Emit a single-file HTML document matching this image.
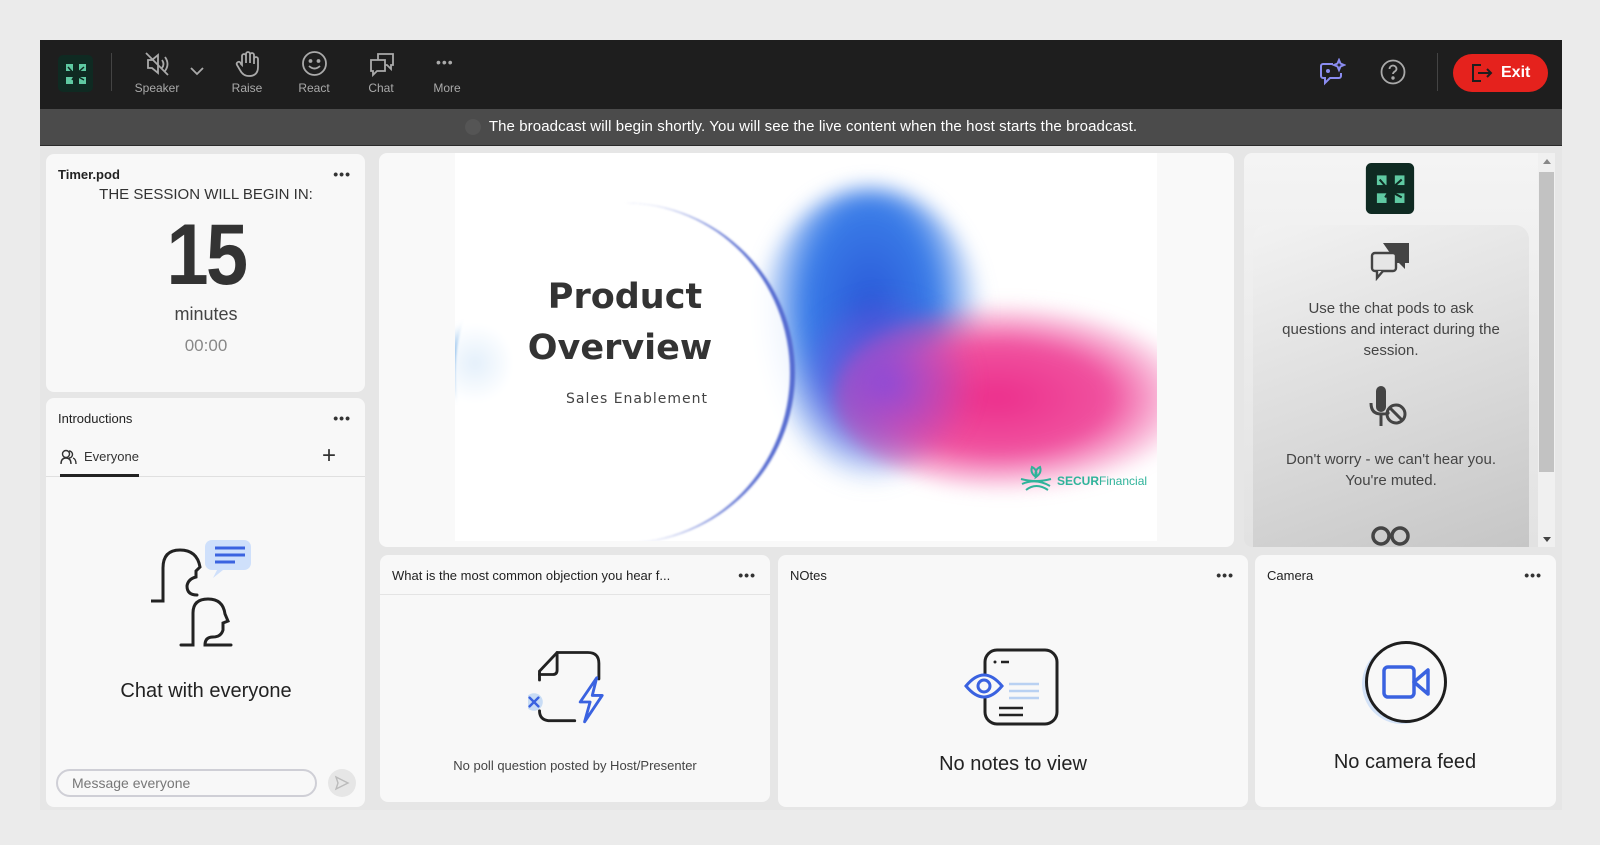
<!DOCTYPE html>
<html><head><meta charset="utf-8"><style>
*{box-sizing:border-box;margin:0;padding:0}
body{width:1600px;height:845px;background:#ebebeb;font-family:"Liberation Sans","DejaVu Sans",sans-serif;position:relative;overflow:hidden;color:#222}
.abs{position:absolute}
.top{left:40px;top:40px;width:1522px;height:69px;background:#1e1e1e}
.banner{left:40px;top:109px;width:1522px;height:37px;background:#4b4b4b;border-bottom:1px solid #2a2a2a;color:#fff;font-size:15px;text-align:center;line-height:36px;letter-spacing:0.1px}
.frame{left:40px;top:146px;width:1522px;height:664px;background:#e6e6e6}
.pod{position:absolute;background:#f8f8f8;border-radius:8px}
.ttl{position:absolute;left:12px;top:12px;font-size:13px;color:#222}
.dots{position:absolute;right:14px;top:12px;font-size:14px;letter-spacing:1px;color:#333;font-weight:bold}
.lbl{position:absolute;top:81px;font-size:12px;color:#aaa;transform:translateX(-50%)}
.c{position:absolute;transform:translateX(-50%);white-space:nowrap;text-align:center}
</style></head><body>
<div class="abs top"></div>
<svg class="abs" style="left:58px;top:55px" width="35" height="37" viewBox="0 0 35 37"><rect width="35" height="37" rx="5" fill="#0f2a22"/><rect x="8" y="9" width="7" height="7" fill="#5fc9a2"/><rect x="21" y="9" width="7" height="7" fill="#5fc9a2"/><rect x="8" y="22" width="7" height="7" fill="#5fc9a2"/><rect x="21" y="22" width="7" height="7" fill="#5fc9a2"/><path d="M10 12 L17 20 L26 12 M17 20 L26 25 M17 20 L14 25" stroke="#0f2a22" stroke-width="1.5" fill="none"/></svg>
<div class="abs" style="left:111px;top:53px;width:1px;height:38px;background:#444"></div>
<svg class="abs" style="left:143px;top:50px" width="28" height="28" viewBox="0 0 28 28" fill="none" stroke="#aaa" stroke-width="1.8"><path d="M5 10h4l6-5v18l-6-5H5z"/><path d="M19 10q3 4 0 8M22 7q5 7 0 14"/><path d="M3 3l22 22"/></svg>
<svg class="abs" style="left:189px;top:66px" width="16" height="10"><path d="M2 2l6 6 6-6" stroke="#aaa" stroke-width="1.8" fill="none"/></svg>
<svg class="abs" style="left:235px;top:50px" width="26" height="28" viewBox="0 0 26 28" fill="none" stroke="#aaa" stroke-width="1.8"><path d="M7 15V6a2 2 0 014 0v7V4a2 2 0 014 0v9V5a2 2 0 014 0v9V9a2 2 0 014 0v8q0 9-9 9-6 0-9-6l-3-5q-1-2 1-3t3 2z"/></svg>
<svg class="abs" style="left:301px;top:50px" width="27" height="27" viewBox="0 0 27 27" fill="none" stroke="#aaa" stroke-width="1.8"><circle cx="13.5" cy="13.5" r="11.5"/><circle cx="9.5" cy="11" r="1" fill="#aaa"/><circle cx="17.5" cy="11" r="1" fill="#aaa"/><path d="M8 16q5.5 5 11 0"/></svg>
<svg class="abs" style="left:368px;top:51px" width="28" height="27" viewBox="0 0 28 27" fill="none" stroke="#aaa" stroke-width="1.8"><path d="M3 9h14v11H9l-4 4v-4H3z"/><path d="M10 9V3h15v11h-2v4l-4-4h-2"/></svg>
<div class="abs" style="left:436px;top:54px;font-size:14px;color:#aaa;letter-spacing:1px">•••</div>
<div class="lbl" style="left:157px">Speaker</div>
<div class="lbl" style="left:247px">Raise</div>
<div class="lbl" style="left:314px">React</div>
<div class="lbl" style="left:381px">Chat</div>
<div class="lbl" style="left:447px">More</div>
<svg class="abs" style="left:1318px;top:58px" width="28" height="28" viewBox="0 0 28 28" fill="none" stroke="#8a8cf0" stroke-width="2"><path d="M15 6H5a2 2 0 00-2 2v10a2 2 0 002 2h2v5l5-5h9a2 2 0 002-2v-3"/><path d="M21 2l1.5 3.5L26 7l-3.5 1.5L21 12l-1.5-3.5L16 7l3.5-1.5z"/><circle cx="10" cy="13" r="1" fill="#8a8cf0"/></svg>
<svg class="abs" style="left:1380px;top:59px" width="26" height="26" viewBox="0 0 26 26" fill="none" stroke="#aaa" stroke-width="1.8"><circle cx="13" cy="13" r="11.5"/><path d="M9.5 10a3.5 3.5 0 117 0c0 2.5-3.5 2.5-3.5 5"/><circle cx="13" cy="19" r="0.8" fill="#aaa"/></svg>
<div class="abs" style="left:1437px;top:53px;width:1px;height:38px;background:#444"></div>
<div class="abs" style="left:1453px;top:54px;width:95px;height:38px;border-radius:19px;background:#e5221d;color:#fff;font-weight:bold;font-size:16px;line-height:38px;padding-left:48px">Exit</div>
<svg class="abs" style="left:1470px;top:63px" width="24" height="20" viewBox="0 0 24 20" fill="none" stroke="#1e1e1e" stroke-width="2"><path d="M11 2H3v16h8"/><path d="M8 10h13M17 6l4 4-4 4"/></svg>
<div class="abs banner"><span style="display:inline-block;width:16px;height:16px;border-radius:50%;background:#555;vertical-align:middle;margin-right:8px"></span>The broadcast will begin shortly. You will see the live content when the host starts the broadcast.</div>
<div class="abs frame"></div>

<div class="pod" style="left:46px;top:154px;width:319px;height:238px">
<div class="ttl" style="font-weight:bold;top:13px">Timer.pod</div><div class="dots">•••</div>
<div class="c" style="left:160px;top:32px;font-size:15px;color:#333">THE SESSION WILL BEGIN IN:</div>
<div class="c" style="left:160px;top:52px;font-size:86px;font-weight:bold;color:#333;transform:translateX(-50%) scaleX(0.88);letter-spacing:-3px">15</div>
<div class="c" style="left:160px;top:150px;font-size:18px;color:#444">minutes</div>
<div class="c" style="left:160px;top:182px;font-size:17px;color:#888">00:00</div>
</div>
<div class="pod" style="left:46px;top:398px;width:319px;height:409px">
<div class="ttl" style="top:13px">Introductions</div><div class="dots">•••</div>
<svg class="abs" style="left:14px;top:51px" width="17" height="16" viewBox="0 0 17 16" fill="none" stroke="#333" stroke-width="1.4"><circle cx="6" cy="5" r="3.5"/><path d="M1 15q0-6 5-6t5 6M9 2a3.5 3.5 0 110 7M13 9q3 1 3 6"/></svg>
<div class="abs" style="left:38px;top:51px;font-size:13px;color:#333">Everyone</div>
<div class="abs" style="left:276px;top:44px;font-size:24px;color:#333;font-weight:300">+</div>
<div class="abs" style="left:0;top:78px;width:319px;height:1px;background:#e0e0e0"></div>
<div class="abs" style="left:14px;top:76px;width:79px;height:3px;background:#222"></div>
<svg class="abs" style="left:105px;top:140px" width="100" height="110" viewBox="0 0 100 110" fill="none"><rect x="60" y="2" width="46" height="30" rx="7" fill="#cfe0fb" transform="translate(-6 0)"/><path d="M66 32l-4 8 10-8z" fill="#cfe0fb"/><path d="M64 10h30M64 17h30M64 24h20" stroke="#3b63e0" stroke-width="3"/><path d="M0 63h12V30q0-18 17-18t20 17l-4 4v6q-8 2-9 9 0 9 10 9" stroke="#222" stroke-width="3" stroke-linecap="round"/><path d="M30 107h12V75q0-14 15-14t17 15l3 7-5 2v7q-2 7-10 7q-8 0-8 8h26" stroke="#222" stroke-width="3" stroke-linecap="round"/></svg>
<div class="c" style="left:160px;top:282px;font-size:20px;color:#222">Chat with everyone</div>
<div class="abs" style="left:10px;top:371px;width:261px;height:28px;border:2px solid #cfcfd6;border-radius:14px;font-size:14px;color:#777;line-height:24px;padding-left:14px">Message everyone</div>
<div class="abs" style="left:282px;top:371px;width:28px;height:28px;border-radius:50%;background:#e6e6e6"></div>
<svg class="abs" style="left:288px;top:377px" width="16" height="16" viewBox="0 0 16 16" fill="none" stroke="#bbb" stroke-width="1.4"><path d="M2 2l12 6-12 6 2-6z"/></svg>
</div>

<div class="pod" style="left:379px;top:153px;width:855px;height:394px;background:#f9f9f9"></div>
<div class="abs" style="left:455px;top:153px;width:702px;height:388px;background:#fff;overflow:hidden">
 <div class="abs" style="left:300px;top:35px;width:230px;height:300px;border-radius:50%;background:radial-gradient(ellipse at 50% 40%,#2a58d8 0,#3a7de8 40%,rgba(80,140,240,0) 70%);filter:blur(10px)"></div>
 <div class="abs" style="left:380px;top:150px;width:360px;height:190px;border-radius:50%;background:radial-gradient(ellipse at 45% 50%,#ec2f8c 0,#f0529f 40%,rgba(245,120,180,0) 72%);filter:blur(8px)"></div>
 <div class="abs" style="left:340px;top:140px;width:180px;height:180px;border-radius:50%;background:radial-gradient(circle,#8a4ad8 0,rgba(160,80,220,0) 70%);filter:blur(10px)"></div>
 <div class="abs" style="left:-15px;top:165px;width:70px;height:90px;border-radius:50%;background:radial-gradient(circle,#1f7ed8 0,rgba(40,140,230,0) 70%);filter:blur(4px)"></div>
 <div class="abs" style="left:0px;top:50px;width:340px;height:340px;border-radius:50%;background:rgba(255,255,255,0.88);border-right:5px solid rgba(58,82,200,0.85);filter:blur(1px)"></div>
 <div class="c" style="left:170px;top:124px;font-family:'DejaVu Sans',sans-serif;font-weight:bold;font-size:35px;color:#333">Product</div>
 <div class="c" style="left:165px;top:175px;font-family:'DejaVu Sans',sans-serif;font-weight:bold;font-size:35px;color:#333">Overview</div>
 <div class="c" style="left:182px;top:238px;font-family:'DejaVu Sans',sans-serif;font-size:14px;letter-spacing:1px;color:#444">Sales Enablement</div>
 <svg class="abs" style="left:563px;top:310px" width="36" height="32" viewBox="0 0 36 32" fill="none" stroke="#2fb39a" stroke-width="2"><path d="M18 14q-6-4-4-10 6 3 4 10q6-4 4-10-6 3-4 10"/><path d="M3 16q15 4 30 0M4 21q14-6 28 2M8 27q10-8 22 0"/></svg>
 <div class="abs" style="left:602px;top:321px;font-size:12px;color:#2fb39a"><b>SECUR</b>Financial</div>
</div>

<div class="pod" style="left:1244px;top:153px;width:311px;height:394px;background:linear-gradient(180deg,#f4f4f4,#e2e2e2)"></div>
<div class="abs" style="left:1538px;top:153px;width:17px;height:394px;background:#f0f0f0"></div>
<div class="abs" style="left:1539px;top:172px;width:15px;height:300px;background:#c2c2c2"></div>
<div class="abs" style="left:1543px;top:159px;width:0;height:0;border:4px solid transparent;border-bottom:5px solid #888;border-top:0"></div>
<div class="abs" style="left:1543px;top:537px;width:0;height:0;border:4px solid transparent;border-top:5px solid #444;border-bottom:0"></div>
<svg class="abs" style="left:1364px;top:163px" width="52" height="51" viewBox="0 0 35 37"><rect width="35" height="37" rx="4" fill="#0f2a22"/><rect x="8" y="9" width="7" height="7" fill="#5fc9a2"/><rect x="21" y="9" width="7" height="7" fill="#5fc9a2"/><rect x="8" y="22" width="7" height="7" fill="#5fc9a2"/><rect x="21" y="22" width="7" height="7" fill="#5fc9a2"/><path d="M10 12 L17 20 L26 12 M17 20 L26 25 M17 20 L14 25" stroke="#0f2a22" stroke-width="1.5" fill="none"/></svg>
<div class="abs" style="left:1253px;top:225px;width:276px;height:322px;border-radius:14px 14px 0 0;background:linear-gradient(160deg,#f2f2f2 0%,#d8d8d8 60%,#c6c6c6 100%);overflow:hidden">
 <svg class="abs" style="left:116px;top:16px" width="44" height="40" viewBox="0 0 44 40"><path d="M14 2h26v20h-4v6l-6-6h-2z" fill="#444"/><rect x="3" y="12" width="24" height="18" rx="3" fill="#e6e6e6" stroke="#444" stroke-width="2.4"/><path d="M8 30v7l6-7" fill="#e6e6e6" stroke="#444" stroke-width="2.4"/></svg>
 <div class="c" style="left:138px;top:73px;font-size:15px;color:#444;line-height:21px;white-space:normal;width:232px">Use the chat pods to ask questions and interact during the session.</div>
 <svg class="abs" style="left:114px;top:160px" width="44" height="42" viewBox="0 0 44 42" fill="none"><rect x="9" y="1" width="10" height="26" rx="5" fill="#444"/><path d="M4 18q0 11 10 11t6-2M14 29v12" stroke="#444" stroke-width="3"/><circle cx="29" cy="29" r="9" stroke="#444" stroke-width="3"/><path d="M23 23l12 12" stroke="#444" stroke-width="3"/></svg>
 <div class="c" style="left:138px;top:224px;font-size:15px;color:#444;line-height:21px">Don't worry - we can't hear you.<br>You're muted.</div>
 <svg class="abs" style="left:116px;top:296px" width="44" height="30"><circle cx="12" cy="15" r="8" stroke="#444" stroke-width="3.5" fill="none"/><circle cx="31" cy="15" r="8" stroke="#444" stroke-width="3.5" fill="none"/></svg>
</div>

<div class="pod" style="left:380px;top:555px;width:390px;height:247px">
 <div class="ttl" style="top:13px">What is the most common objection you hear f...</div><div class="dots">•••</div>
 <div class="abs" style="left:0;top:39px;width:390px;height:1px;background:#e4e4e4"></div>
 <svg class="abs" style="left:148px;top:92px" width="100" height="88" viewBox="0 0 90 80" fill="none" stroke-linecap="round"><path d="M10 30V22l16-17h28q10 0 10 10v14M10 58q0 8 8 9h24" stroke="#222" stroke-width="2.6"/><path d="M26 5v16q0 4-4 4H10" stroke="#222" stroke-width="2.6"/><circle cx="5" cy="50" r="8" fill="#c8dcf5"/><path d="M1 46l8 8M9 46l-8 8" stroke="#3a62e0" stroke-width="2.2"/><path d="M62 28l-15 22h9l-5 18 16-24h-9z" stroke="#3a62e0" stroke-width="2.6" stroke-linejoin="round"/></svg>
 <div class="c" style="left:195px;top:203px;font-size:13px;color:#444">No poll question posted by Host/Presenter</div>
</div>
<div class="pod" style="left:778px;top:555px;width:470px;height:252px">
 <div class="ttl" style="top:13px">NOtes</div><div class="dots">•••</div>
 <svg class="abs" style="left:185px;top:93px" width="100" height="80" viewBox="0 0 100 80" fill="none" stroke-width="3"><rect x="22" y="2" width="72" height="74" rx="12" stroke="#222"/><circle cx="32" cy="14" r="1.5" fill="#222"/><path d="M38 14h8M36 60h24M36 67h24" stroke="#222" stroke-width="2.6"/><path d="M46 36h30M46 43h30M46 50h30" stroke="#b9d1f2" stroke-width="2.4"/><path d="M3 38q18-22 36 0-18 22-36 0z" stroke="#3a62e0" fill="#f8f8f8"/><circle cx="21" cy="38" r="6" stroke="#3a62e0"/></svg>
 <div class="c" style="left:235px;top:198px;font-size:20px;color:#222">No notes to view</div>
</div>
<div class="pod" style="left:1255px;top:555px;width:301px;height:252px">
 <div class="ttl" style="top:13px">Camera</div><div class="dots">•••</div>
 <div class="abs" style="left:107px;top:89px;width:80px;height:80px;border-radius:50%;background:#d3e2f7"></div>
 <div class="abs" style="left:110px;top:86px;width:82px;height:82px;border-radius:50%;border:3px solid #1e1e1e;background:#f8f8f8"></div>
 <svg class="abs" style="left:127px;top:110px" width="50" height="34" viewBox="0 0 50 34" fill="none" stroke="#3a62e0" stroke-width="3.5" stroke-linejoin="round"><rect x="2" y="2" width="30" height="30" rx="4"/><path d="M32 17l14-12v24z"/></svg>
 <div class="c" style="left:150px;top:196px;font-size:20px;color:#222">No camera feed</div>
</div>
</body></html>
